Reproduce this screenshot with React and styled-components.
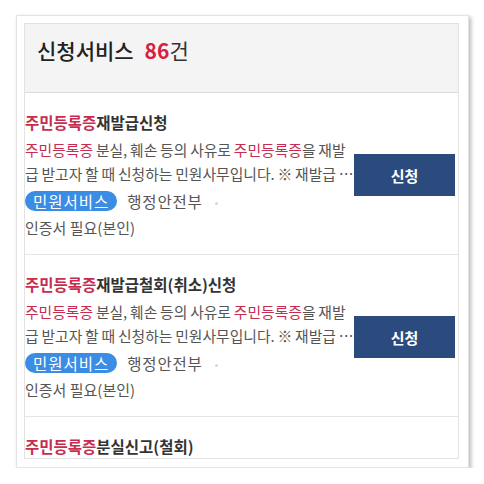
import React from "react";
import styled, { createGlobalStyle } from "styled-components";

const GlobalStyle = createGlobalStyle`
    body {
        margin: 0;
        background: #ffffff;
        font-family: "Noto Sans CJK KR", "Noto Sans", sans-serif;
    }
`

const Page = styled.div`
    padding: 15px 0 0 16px;
`

const Card = styled.div`
    box-sizing: border-box;
    width: 453px;
    height: 453px;
    padding: 7px 9px 9px 7px;
    background: #fff;
    border: 1px solid #e4e4e4;
    box-shadow: 2px 2px 4px rgba(0, 0, 0, 0.28);
`

const Box = styled.div`
    box-sizing: border-box;
    height: 436px;
    border: 1px solid #e2e2e2;
    overflow: hidden;
`

const Header = styled.div`
    box-sizing: border-box;
    height: 69px;
    padding: 12px 0 0 12px;
    background: #f4f4f4;
    border-bottom: 1px solid #dcdcdc;
`

const Title = styled.h2`
    margin: 0;
    font-size: 21px;
    line-height: 28px;
    font-weight: 500;
    color: #222;
`

const Count = styled.span`
    margin-left: 11px;
    color: #d5213f;
    font-weight: 700;
`

const Unit = styled.span`
    font-weight: 400;
    color: #333;
`

const Item = styled.div`
    display: flex;
    align-items: center;
    padding: 18px 3px 15px 0;
    border-bottom: 1px solid #e6e6e6;
`

const Body = styled.div`
    flex: 1;
    min-width: 0;
`

const ItemTitle = styled.h3`
    margin: 0 0 5px;
    font-size: 15.5px;
    line-height: 22px;
    font-weight: 700;
    color: #333;
`

const Mark = styled.span`
    color: #c62d50;
`

const Desc = styled.p`
    width: 333px;
    margin: 0;
    font-size: 14.8px;
    line-height: 24px;
    color: #555;
    word-spacing: -0.5px;
    display: -webkit-box;
    -webkit-line-clamp: 2;
    -webkit-box-orient: vertical;
    overflow: hidden;
`

const Meta = styled.div`
    display: flex;
    align-items: center;
    gap: 10px;
    margin-top: 5px;
`

const Tag = styled.span`
    height: 20px;
    padding: 0 8px;
    border-radius: 10px;
    background: #3a8ce4;
    color: #fff;
    font-size: 15.5px;
    line-height: 20px;
    letter-spacing: 1px;
`

const Org = styled.span`
    font-size: 15.5px;
    line-height: 20px;
    color: #555;
    letter-spacing: 0.8px;

    &::after {
        content: "";
        display: inline-block;
        width: 3px;
        height: 3px;
        margin: 0 0 3px 12px;
        border-radius: 50%;
        background: #d6d6d6;
    }
`

const Note = styled.div`
    margin-top: 6px;
    font-size: 15px;
    line-height: 22px;
    color: #555;
`

const ApplyButton = styled.button`
    flex: none;
    width: 101px;
    height: 42px;
    border: none;
    background: #2b4a7e;
    color: #fff;
    font-family: inherit;
    font-size: 15px;
    font-weight: 700;
`

const services = [
    { rest: "재발급신청" },
    { rest: "재발급철회(취소)신청" },
    { rest: "분실신고(철회)" },
]

function ServiceItem({ rest }) {
    return (
        <Item>
            <Body>
                <ItemTitle>
                    <Mark>주민등록증</Mark>{rest}
                </ItemTitle>
                <Desc>
                    <Mark>주민등록증</Mark> 분실, 훼손 등의 사유로 <Mark>주민등록증</Mark>을
                    재발급 받고자 할 때 신청하는 민원사무입니다. ※ 재발급 신청 시 수수료가 부과됩니다.
                </Desc>
                <Meta>
                    <Tag>민원서비스</Tag>
                    <Org>행정안전부</Org>
                </Meta>
                <Note>인증서 필요(본인)</Note>
            </Body>
            <ApplyButton>신청</ApplyButton>
        </Item>
    );
}

function App() {
    return (
        <>
        <GlobalStyle />
        <Page>
            <Card>
                <Box>
                    <Header>
                        <Title>
                            신청서비스<Count>86</Count><Unit>건</Unit>
                        </Title>
                    </Header>
                    {services.map((s) => (
                        <ServiceItem key={s.rest} rest={s.rest} />
                    ))}
                </Box>
            </Card>
        </Page>
        </>
    );
}

export default App;
